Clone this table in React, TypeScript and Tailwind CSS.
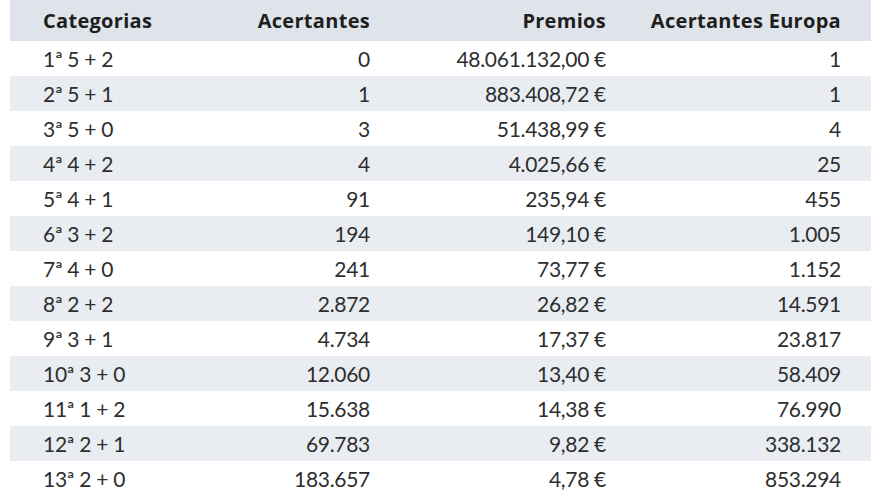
const rows: [string, string, string, string][] = [
  ["1ª 5 + 2", "0", "48.061.132,00 €", "1"],
  ["2ª 5 + 1", "1", "883.408,72 €", "1"],
  ["3ª 5 + 0", "3", "51.438,99 €", "4"],
  ["4ª 4 + 2", "4", "4.025,66 €", "25"],
  ["5ª 4 + 1", "91", "235,94 €", "455"],
  ["6ª 3 + 2", "194", "149,10 €", "1.005"],
  ["7ª 4 + 0", "241", "73,77 €", "1.152"],
  ["8ª 2 + 2", "2.872", "26,82 €", "14.591"],
  ["9ª 3 + 1", "4.734", "17,37 €", "23.817"],
  ["10ª 3 + 0", "12.060", "13,40 €", "58.409"],
  ["11ª 1 + 2", "15.638", "14,38 €", "76.990"],
  ["12ª 2 + 1", "69.783", "9,82 €", "338.132"],
  ["13ª 2 + 0", "183.657", "4,78 €", "853.294"],
];

const cols = "grid grid-cols-[207px_120px_236px_235px] pl-[33px] pr-[30px] items-center";

export default function App() {
  return (
    <div className="w-[880px] h-[495px] overflow-hidden bg-white pl-[10px] pr-[9px]">
      <div className="w-[861px]">
        <div
          className={`${cols} h-[41px] bg-[#dfe4ea] text-[#1e1e1e] font-bold text-[20px] tracking-[0.3px]`}
          style={{ fontFamily: '"Open Sans", sans-serif' }}
        >
          <div>Categorias</div>
          <div className="text-right">Acertantes</div>
          <div className="text-right">Premios</div>
          <div className="text-right">Acertantes Europa</div>
        </div>
        {rows.map((r, i) => (
          <div
            key={i}
            className={`${cols} h-[35px] text-[21px] tracking-[-0.3px] text-[#2e2e2e] ${
              i % 2 === 1 ? "bg-[#e9edf1]" : "bg-white"
            }`}
            style={{ fontFamily: "Lato, sans-serif" }}
          >
            <div>{r[0]}</div>
            <div className="text-right">{r[1]}</div>
            <div className="text-right">{r[2]}</div>
            <div className="text-right">{r[3]}</div>
          </div>
        ))}
      </div>
    </div>
  );
}
